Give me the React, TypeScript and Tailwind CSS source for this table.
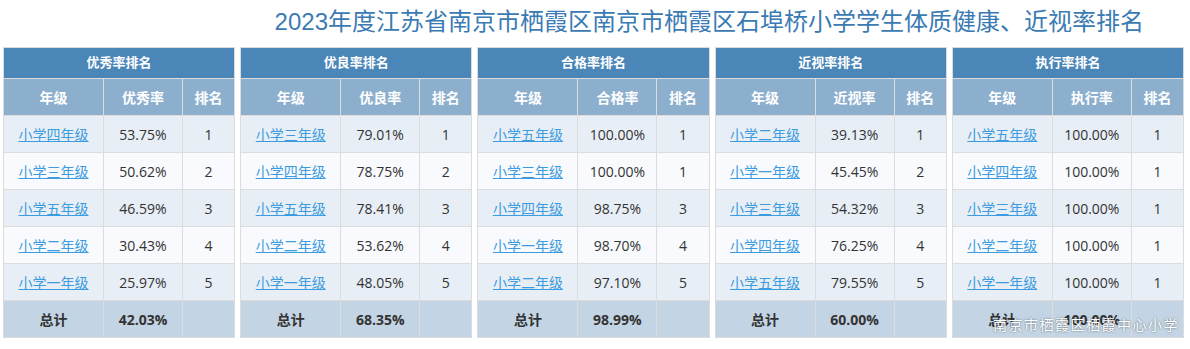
const tables = [
  {
    title: '优秀率排名',
    col: '优秀率',
    rows: [
      ['小学四年级', '53.75%', '1'],
      ['小学三年级', '50.62%', '2'],
      ['小学五年级', '46.59%', '3'],
      ['小学二年级', '30.43%', '4'],
      ['小学一年级', '25.97%', '5'],
    ],
    total: '42.03%',
  },
  {
    title: '优良率排名',
    col: '优良率',
    rows: [
      ['小学三年级', '79.01%', '1'],
      ['小学四年级', '78.75%', '2'],
      ['小学五年级', '78.41%', '3'],
      ['小学二年级', '53.62%', '4'],
      ['小学一年级', '48.05%', '5'],
    ],
    total: '68.35%',
  },
  {
    title: '合格率排名',
    col: '合格率',
    rows: [
      ['小学五年级', '100.00%', '1'],
      ['小学三年级', '100.00%', '1'],
      ['小学四年级', '98.75%', '3'],
      ['小学一年级', '98.70%', '4'],
      ['小学二年级', '97.10%', '5'],
    ],
    total: '98.99%',
  },
  {
    title: '近视率排名',
    col: '近视率',
    rows: [
      ['小学二年级', '39.13%', '1'],
      ['小学一年级', '45.45%', '2'],
      ['小学三年级', '54.32%', '3'],
      ['小学四年级', '76.25%', '4'],
      ['小学五年级', '79.55%', '5'],
    ],
    total: '60.00%',
  },
  {
    title: '执行率排名',
    col: '执行率',
    rows: [
      ['小学五年级', '100.00%', '1'],
      ['小学四年级', '100.00%', '1'],
      ['小学三年级', '100.00%', '1'],
      ['小学二年级', '100.00%', '1'],
      ['小学一年级', '100.00%', '1'],
    ],
    total: '100.00%',
  },
]

function RankTable({ t }: { t: (typeof tables)[number] }) {
  return (
    <table className="w-full table-fixed border-collapse border border-[#dcdcdc] text-center text-[14px]">
      <colgroup>
        <col className="w-[100px]" />
        <col className="w-[79px]" />
        <col />
      </colgroup>
      <thead>
        {/* 表头 */}
        <tr className="h-[31px] bg-[#4a86b8] text-white">
          <th colSpan={3} className="border border-[#dcdcdc] text-[13px] font-bold">
            {t.title}
          </th>
        </tr>
        <tr className="h-[37px] bg-[#8cafce] text-white">
          <th className="border border-[#dcdcdc] font-bold">年级</th>
          <th className="border border-[#dcdcdc] font-bold">{t.col}</th>
          <th className="border border-[#dcdcdc] font-bold">排名</th>
        </tr>
      </thead>
      <tbody className="text-[#333]">
        {t.rows.map((r, i) => (
          <tr key={i} className={i % 2 === 0 ? 'h-[37px] bg-[#e8eef6]' : 'h-[37px] bg-[#f8fafd]'}>
            <td className="border border-[#dcdcdc]">
              <a href="#" className="text-[#3c9ce0] underline">
                {r[0]}
              </a>
            </td>
            <td className="border border-[#dcdcdc]">{r[1]}</td>
            <td className="border border-[#dcdcdc]">{r[2]}</td>
          </tr>
        ))}
        {/* 总计 */}
        <tr className="h-[37px] bg-[#c3d5e4] font-bold">
          <td className="border border-[#dcdcdc]">总计</td>
          <td className="border border-[#dcdcdc]">{t.total}</td>
          <td className="border border-[#dcdcdc]"></td>
        </tr>
      </tbody>
    </table>
  )
}

export default function App() {
  return (
    <div
      className="relative h-[349px] w-[1190px] overflow-hidden bg-white"
      style={{ fontFamily: '"Open Sans", "Noto Sans CJK SC", sans-serif' }}
    >
      <div className="flex h-[47px] justify-end pr-[46px] pt-[6px]">
        <h1
          className="text-[24px] leading-[32px] font-normal text-[#3b7bb3]"
          style={{ fontFamily: '"Liberation Sans", "Noto Sans CJK SC", sans-serif' }}
        >
          2023年度江苏省南京市栖霞区南京市栖霞区石埠桥小学学生体质健康、近视率排名
        </h1>
      </div>

      <div className="grid grid-cols-5 gap-[5px] pl-[3px] pr-[6px]">
        {tables.map((t) => (
          <RankTable key={t.title} t={t} />
        ))}
      </div>

      {/* 水印 */}
      <div
        className="absolute bottom-[14px] right-[11px] text-[14px] tracking-[1.5px] text-white [text-shadow:0_0_2px_rgba(0,0,0,0.6)]"
        style={{ fontFamily: '"Noto Sans CJK SC", sans-serif' }}
      >
        南京市栖霞区栖霞中心小学
      </div>
    </div>
  )
}
